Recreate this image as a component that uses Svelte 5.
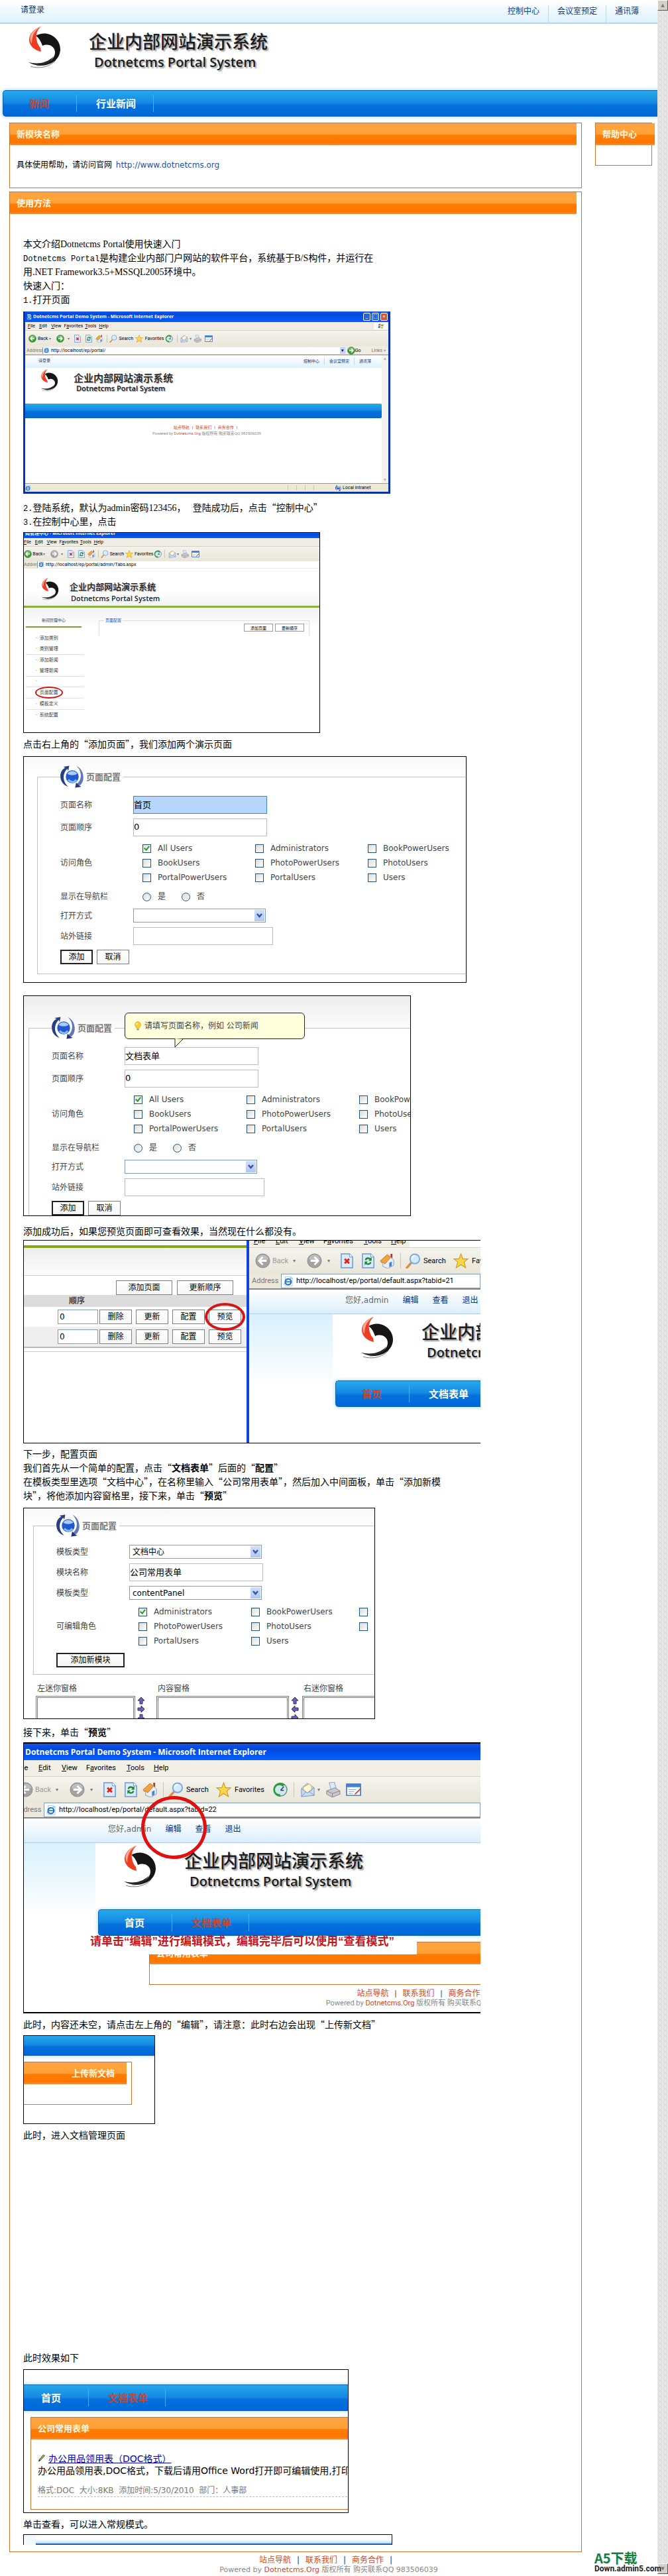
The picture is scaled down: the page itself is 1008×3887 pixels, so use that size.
<script>
  const roles = [
    "All Users", "Administrators", "BookPowerUsers",
    "BookUsers", "PhotoPowerUsers", "PhotoUsers",
    "PortalPowerUsers", "PortalUsers", "Users",
  ];
  const editRoles = ["Administrators", "BookPowerUsers", "", "PhotoPowerUsers", "PhotoUsers", "", "PortalUsers", "Users"];
  const adminMenu = ["添加类别", "类别管理", "添加新闻", "管理新闻", "", "页面配置", "模板定义", "系统配置"];
  const docMenu = ["首页", "文档表单"];
</script>

{#snippet logo()}
  <svg class="logo" viewBox="0 0 52 64" aria-hidden="true">
    <path d="M12 14C28 4 49 16 49 34C49 50 34 61 12 59C28 58 41 50 41 39C41 30 31 25 22 29C20 23 17 17 12 14Z" fill="#161414" />
    <path d="M1 54C14 57 28 56 39 45C30 62 14 61 1 54Z" fill="#2b2828" />
    <path d="M4 60C16 64 32 62 42 51" fill="none" stroke="#777" stroke-width="1" />
    <path d="M20 0C13 6 11 14 14 23C15 27 17 30 19 32L20 38C10 36 2 29 2 20C2 10 11 3 20 0Z" fill="#ee3d22" />
    <path d="M20 0C10 6 6 14 6 26C0 16 5 6 20 0Z" fill="#f9a58f" />
  </svg>
{/snippet}

{#snippet brand()}
  <div class="brand">
    {@render logo()}
    <div class="brand-text">
      <strong>企业内部网站演示系统</strong>
      <span>Dotnetcms Portal System</span>
    </div>
  </div>
{/snippet}

{#snippet nav(items, active)}
  <nav class="nav">
    {#each items as item, i}
      <a href="#nav" class:active={i === active}>{item}</a>
    {/each}
  </nav>
{/snippet}

{#snippet userLinks()}
  <div class="userbar">
    <span>您好,admin</span>
    <a href="#edit">编辑</a>
    <a href="#view">查看</a>
    <a href="#exit">退出</a>
  </div>
{/snippet}

{#snippet footer()}
  <div class="footer">
    <p class="footer-links">
      <a href="#map">站点导航</a><i>|</i><a href="#contact">联系我们</a><i>|</i><a href="#biz">商务合作</a><i>|</i>
    </p>
    <p class="copyright">Powered by <a href="#org">Dotnetcms.Org</a> 版权所有 购买联系QQ 983506039</p>
  </div>
{/snippet}

{#snippet icon(name)}
  <svg class="icon" viewBox="0 0 24 24" aria-hidden="true">
    {#if name === "back" || name === "forward" || name === "back-off" || name === "forward-off"}
      <circle cx="12" cy="12" r="11" fill={name.endsWith("off") ? "#a3a3a3" : "#3a9a35"} stroke={name.endsWith("off") ? "#8a8a8a" : "#2a7a28"} />
      <path d="M3 9a9.500 9.500 0 0 1 18 0a20 20 0 0 1-18 0Z" fill="#fff" opacity=".3" />
      {#if name.startsWith("back")}
        <path d="M12 6l-6 6 6 6M7 12h11" fill="none" stroke="#fff" stroke-width="3" />
      {:else}
        <path d="M12 6l6 6-6 6M17 12H6" fill="none" stroke="#fff" stroke-width="3" />
      {/if}
    {:else if name === "stop" || name === "refresh"}
      <path d="M3 1h13l5 5v17H3Z" fill="#dcebfb" stroke="#6d94cf" stroke-width="1.500" />
      <path d="M16 1v5h5" fill="#fff" stroke="#6d94cf" />
      {#if name === "stop"}
        <path d="M8.500 9l7 7M15.500 9l-7 7" stroke="#e02515" stroke-width="3" />
      {:else}
        <path d="M8 11c1-4 6-4 8-1M16 14c-1 4-6 4-8 1" fill="none" stroke="#1d8a2f" stroke-width="2.500" />
        <path d="M17.500 6v6h-5ZM6.500 19v-6h5Z" fill="#1d8a2f" />
      {/if}
    {:else if name === "home"}
      <path d="M17 1h3v7h-3Z" fill="#b33a2e" />
      <path d="M5 12v9l8 3 9-5v-8l-7-7Z" fill="#e6effb" stroke="#7d9cc9" />
      <path d="M1 12L12 2l5 5-9 10-3-3-2 1Z" fill="#f2a33f" stroke="#c67420" />
      <path d="M15 15l4-2v7l-4 2Z" fill="#4f7fc4" />
    {:else if name === "search"}
      <path d="M9 15L2 23" stroke="#d98b4a" stroke-width="3.500" stroke-linecap="round" />
      <circle cx="14.500" cy="9" r="7.500" fill="#d3ecfd" stroke="#7fa9d6" stroke-width="2" />
      <path d="M10 8a5 5 0 0 1 5-4" fill="none" stroke="#fff" stroke-width="2" />
    {:else if name === "star"}
      <path d="M12 1l3 8h8l-6 5 2.500 9L12 18l-7.500 5L7 14 1 9h8Z" fill="#fbd84a" stroke="#d39a1e" stroke-width="1.200" />
    {:else if name === "history"}
      <circle cx="13" cy="12" r="10" fill="#cfe6ee" stroke="#5f8f8f" stroke-width="1.500" />
      <path d="M20 4A11 11 0 1 0 13 23l-1-4a7 7 0 1 1 4-12Z" fill="#2f9a3b" />
      <path d="M13 13l5-6M13 13h5" stroke="#246" stroke-width="1.500" />
    {:else if name === "mail"}
      <path d="M2 10l9-8 11 7v12L2 23Z" fill="#c7dcf5" stroke="#7795c4" />
      <path d="M5 8l9-5 4 3v7l-7 4-6-4Z" fill="#fff7da" stroke="#c9a85a" />
      <path d="M2 10l9 7 11-8M2 23l7-8M22 21l-8-6" fill="none" stroke="#7795c4" />
    {:else if name === "print"}
      <path d="M6 1l8-1 3 10-8 2Z" fill="#dbe8f8" stroke="#8aa0bd" />
      <path d="M2 14l13-5 8 5v5l-12 5-9-5Z" fill="#c9c9cf" stroke="#84848c" />
      <path d="M2 14l9 4 12-4M11 18v6" fill="none" stroke="#84848c" />
    {:else if name === "edit"}
      <path d="M1 3h22v18H1Z" fill="#fff" stroke="#2f66b8" stroke-width="1.500" />
      <path d="M1 3h22v5H1Z" fill="#3f80d8" />
      <path d="M4 12h12M4 15h9M4 18h7" stroke="#8aa5c9" />
      <path d="M23 9l-8 8-2 3 3-1 8-8Z" fill="#c7573a" />
    {:else if name === "ie"}
      <path d="M4 1h13l4 4v18H4Z" fill="#fff" stroke="#8ba8d0" />
      <circle cx="11" cy="13" r="7" fill="none" stroke="#1d6fc9" stroke-width="3.500" />
      <path d="M5 13h13" stroke="#1d6fc9" stroke-width="2.500" />
      <path d="M1 20C4 10 14 3 21 4" fill="none" stroke="#3f9ae0" stroke-width="1.500" />
    {:else if name === "globe"}
      <circle cx="12" cy="12" r="6.500" fill="#2458d0" />
      <path d="M7 9a6 6 0 0 1 10 0c-3 2-7 2-10 0Z" fill="#a9ccfa" />
      <path d="M8 15c3 3 6 3 8 0" fill="none" stroke="#7fc0ff" stroke-width="2" />
      <path d="M8 22C-2 19-2 6 5 3L3 2l6-1-1 5-1-2C2 9 2 17 8 22Z" fill="#27407f" />
      <path d="M16 1c9 4 9 17 3 20l2 1-6 1 1-5 1 1C22 15 22 6 16 1Z" fill="#5f79b8" />
      <path d="M19 21l2 1-6 1 1-5 1 1Z" fill="#27307a" />
    {:else if name === "bulb"}
      <path d="M12 1a8 8 0 0 0-5 14l2 4h6l2-4A8 8 0 0 0 12 1Z" fill="#fccb2f" stroke="#e0a010" />
      <path d="M9 20h6v3H9Z" fill="#8a8a8a" />
      <circle cx="9.500" cy="7" r="2.500" fill="#fff3b0" />
    {:else if name === "pencil"}
      <path d="M3 22l2-6L17 2l4 3L8 19Z" fill="#b9a46a" stroke="#222" stroke-width="1.500" />
      <path d="M3 22l2-6 3 3Z" fill="#222" />
    {:else if name === "flag"}
      <path d="M3 5c3-2 5-2 8 0l-1 6c-3-2-5-2-8 0Z" fill="#e8532b" />
      <path d="M13 6c3 1 6 1 9-1l-2 7c-3 1-5 1-8 0Z" fill="#6fb53a" />
      <path d="M2 13c3-2 5-2 8 0l-2 7c-2-2-5-2-7 0Z" fill="#3c7fd9" />
      <path d="M12 14c3 1 5 1 8 0l-2 7c-3 1-5 1-8-1Z" fill="#f6c12c" />
    {/if}
  </svg>
{/snippet}

{#snippet menuRow()}
  <div class="menu-row">
    <span><u>F</u>ile</span><span><u>E</u>dit</span><span><u>V</u>iew</span>
    <span>F<u>a</u>vorites</span><span><u>T</u>ools</span><span><u>H</u>elp</span>
  </div>
{/snippet}

{#snippet toolbar(back, forward)}
  <div class="toolbar">
    <div class="tools">
      {@render icon(back)}
      <span class:off={back === "back-off"}>Back</span><i>▾</i>
      {@render icon(forward)}<i>▾</i>
      {@render icon("stop")}
      {@render icon("refresh")}
      {@render icon("home")}
      <b></b>
      {@render icon("search")}<span>Search</span>
      {@render icon("star")}<span>Favorites</span>
      {@render icon("history")}
      <b></b>
      {@render icon("mail")}<i>▾</i>
      {@render icon("print")}
      {@render icon("edit")}
    </div>
  </div>
{/snippet}

{#snippet address(url)}
  <div class="address">
    <span>Address</span>
    <div class="url">{@render icon("ie")}{url}</div>
  </div>
{/snippet}

{#snippet legend()}
  <legend>{@render icon("globe")}页面配置</legend>
{/snippet}

{#snippet checks(list)}
  <div class="checks">
    {#each list as role, i}
      <label><input type="checkbox" checked={i === 0} aria-label={role || "角色"} />{role}</label>
    {/each}
  </div>
{/snippet}

{#snippet dropdown(id, value)}
  <span class="dropdown">
    <select {id}><option>{value}</option></select>
    <svg viewBox="0 0 15 17" aria-hidden="true"><path d="M4 6l3.500 4L11 6" fill="none" stroke="#3c5590" stroke-width="2.500" /></svg>
  </span>
{/snippet}

{#snippet pageForm(id, name)}
  <fieldset class="config">
    {@render legend()}
    <div class="rows">
      <label for="{id}-name">页面名称</label>
      <input id="{id}-name" class="text" class:focused={name === "首页"} type="text" value={name} />
      <label for="{id}-order">页面顺序</label>
      <input id="{id}-order" class="text" type="text" value="0" />
      <span>访问角色</span>
      {@render checks(roles)}
      <span>显示在导航栏</span>
      <div class="radios">
        <label><input type="radio" name="{id}-show" />是</label>
        <label><input type="radio" name="{id}-show" />否</label>
      </div>
      <label for="{id}-open">打开方式</label>
      {@render dropdown(id + "-open", "")}
      <label for="{id}-link">站外链接</label>
      <input id="{id}-link" class="text wide" type="text" />
      <div class="actions">
        <button class="btn primary">添加</button>
        <button class="btn">取消</button>
      </div>
    </div>
  </fieldset>
{/snippet}

{#snippet arrow(turn)}
  <svg class="arrow" viewBox="0 0 12 12" aria-hidden="true">
    <path d="M6 1l5 5H8v5H4V6H1Z" transform="rotate({turn} 6 6)" fill="#6a62b5" stroke="#2d2a66" />
  </svg>
{/snippet}

<div class="page">
  <div class="content">
    <header>
      <div class="topbar">
        <a class="login" href="#login">请登录</a>
        <div class="toplinks">
          <a href="#control">控制中心</a><a href="#room">会议室预定</a><a href="#book">通讯薄</a>
        </div>
      </div>
      {@render brand()}
      {@render nav(["新闻", "行业新闻"], 0)}
    </header>

    <div class="columns">
      <main>
        <section class="panel">
          <h2>新模块名称</h2>
          <p class="help">具体使用帮助，请访问官网 <a href="#site">http://www.dotnetcms.org</a></p>
        </section>

        <section class="panel">
          <h2>使用方法</h2>
          <article>
            <p>
              本文介绍<span class="serif">Dotnetcms Portal</span>使用快速入门<br />
              <span class="mono">Dotnetcms Portal</span>是构建企业内部门户网站的软件平台，系统基于<span class="serif">B/S</span>构件，并运行在<br />
              用<span class="serif">.NET Framework3.5+MSSQL2005</span>环境中。<br />
              快速入门：<br />
              <span class="mono">1.</span>打开页面
            </p>

            <figure class="shot-home small">
              <div class="title-row">
                {@render icon("ie")}<span>Dotnetcms Portal Demo System - Microsoft Internet Explorer</span>
                <div class="win"><i>_</i><i>□</i><i class="close">×</i></div>
              </div>
              <div class="menu-line">{@render menuRow()}<div class="flag">{@render icon("flag")}</div></div>
              {@render toolbar("back", "forward")}
              <div class="address-line">
                {@render address("http://localhost/ep/portal/")}
                <i class="drop">▾</i>{@render icon("forward")}<span>Go</span><span class="links">Links »</span>
              </div>
              <div class="view">
                <div class="view-page">
                  <div class="topbar">
                    <span class="login">请登录</span>
                    <div class="toplinks"><span>控制中心</span><span>会议室预定</span><span>通讯薄</span></div>
                  </div>
                  {@render brand()}
                  {@render nav([], -1)}
                  {@render footer()}
                </div>
                <div class="view-scroll"><i>▴</i><i>▾</i></div>
              </div>
              <div class="status">{@render icon("ie")}<b></b><b></b><b></b><b></b><span class="zone">{@render icon("globe")}Local intranet</span></div>
            </figure>

            <p>
              <span class="mono">2.</span>登陆系统，默认为<span class="serif">admin </span>密码<span class="serif">123456</span>，<span class="mono">&nbsp;</span> 登陆成功后，点击“控制中心”<br />
              <span class="mono">3.</span>在控制中心里，点击
            </p>

            <figure class="shot-admin small">
              <div class="title-row"><span>闻管理中心 - Microsoft Internet Explorer</span></div>
              <div class="menu-line">{@render menuRow()}</div>
              {@render toolbar("back", "forward-off")}
              <div class="address-line">{@render address("http://localhost/ep/portal/admin/Tabs.aspx")}</div>
              {@render brand()}
              <div class="admin">
                <div class="side">
                  <h3>新闻管理中心</h3>
                  <ul>
                    {#each adminMenu as item, i}
                      <li class:ruled={i === 1 || i > 2}>
                        <i>·</i><span class:ringed={i === 5}>{item}</span>
                      </li>
                    {/each}
                  </ul>
                </div>
                <fieldset>
                  <legend>页面配置</legend>
                  <button>添加页面</button><button>更新顺序</button>
                </fieldset>
              </div>
            </figure>

            <p>点击右上角的“添加页面”，我们添加两个演示页面</p>

            <figure class="shot-form first">{@render pageForm("a", "首页")}</figure>

            <figure class="shot-form second">
              {@render pageForm("b", "文档表单")}
              <div class="tip">
                {@render icon("bulb")}请填写页面名称，例如 公司新闻
                <svg viewBox="0 0 14 14" aria-hidden="true"><path d="M1 0v13L13 1" fill="#ffffdc" stroke="#222" /></svg>
              </div>
            </figure>

            <p>添加成功后，如果您预览页面即可查看效果，当然现在什么都没有。</p>

            <figure class="shot-split">
              <div class="list">
                <div class="green"></div>
                <div class="list-head"></div>
                <div class="list-actions"><button class="btn">添加页面</button><button class="btn">更新顺序</button></div>
                <table>
                  <thead><tr><th>顺序</th></tr></thead>
                  <tbody>
                    {#each [0, 1] as row}
                      <tr>
                        <td>
                          <input type="text" value="0" aria-label="顺序" />
                          <button class="btn">删除</button>
                          <button class="btn">更新</button>
                          <button class="btn">配置</button>
                          <button class="btn" class:circled={row === 0}>预览</button>
                        </td>
                      </tr>
                    {/each}
                  </tbody>
                </table>
                <div class="list-end"></div>
              </div>
              <div class="browser">
                {@render menuRow()}
                {@render toolbar("back-off", "forward-off")}
                {@render address("http://localhost/ep/portal/default.aspx?tabid=21")}
                {@render userLinks()}
                <div class="inner">{@render brand()}{@render nav(docMenu, 0)}</div>
              </div>
            </figure>

            <p>
              下一步，配置页面<br />
              我们首先从一个简单的配置，点击“<b>文档表单</b>”后面的“<b>配置</b>”<br />
              在模板类型里选项“文档中心”，在名称里输入“公司常用表单”，然后加入中间面板，单击“添加新模<br />
              块”，将他添加内容窗格里，接下来，单击“<b>预览</b>”
            </p>

            <figure class="shot-form module">
              <fieldset class="config">
                {@render legend()}
                <div class="rows">
                  <label for="m-type">模板类型</label>
                  {@render dropdown("m-type", "文档中心")}
                  <label for="m-name">模块名称</label>
                  <input id="m-name" class="text" type="text" value="公司常用表单" />
                  <label for="m-panel">模板类型</label>
                  {@render dropdown("m-panel", "contentPanel")}
                  <span>可编辑角色</span>
                  {@render checks(editRoles)}
                  <div class="actions"><button class="btn primary long">添加新模块</button></div>
                </div>
              </fieldset>
              <div class="panes">
                <div class="pane"><span>左迷你窗格</span><div class="box"></div></div>
                <div class="arrows">{@render arrow(0)}{@render arrow(90)}{@render arrow(180)}</div>
                <div class="pane middle"><span>内容窗格</span><div class="box"></div></div>
                <div class="arrows">{@render arrow(0)}{@render arrow(270)}{@render arrow(90)}</div>
                <div class="pane"><span>右迷你窗格</span><div class="box"></div></div>
              </div>
            </figure>

            <p>接下来，单击“<b>预览</b>”</p>

            <figure class="shot-edit">
              <div class="title-row"><span>Dotnetcms Portal Demo System - Microsoft Internet Explorer</span></div>
              <div class="browser">
                {@render menuRow()}
                {@render toolbar("back-off", "forward-off")}
                {@render address("http://localhost/ep/portal/default.aspx?tabid=22")}
                {@render userLinks()}
                <div class="inner">
                  {@render brand()}
                  {@render nav(docMenu, 1)}
                  <div class="panel"><h2>公司常用表单</h2></div>
                  {@render footer()}
                </div>
              </div>
              <p class="note">请单击“编辑”进行编辑模式，编辑完毕后可以使用“查看模式”</p>
              <div class="circle"></div>
            </figure>

            <p>此时，内容还未空，请点击左上角的“编辑”，请注意：此时右边会出现“上传新文档”</p>

            <figure class="shot-upload">
              {@render nav([], -1)}
              <div class="panel"><h2>上传新文档</h2></div>
            </figure>

            <p>此时，进入文档管理页面</p>
            <div class="missing"></div>
            <p>此时效果如下</p>

            <figure class="shot-docs">
              {@render nav(docMenu, 1)}
              <div class="panel">
                <h2>公司常用表单</h2>
                <div class="doc">
                  <div>{@render icon("pencil")}<a href="#doc">办公用品领用表（DOC格式）</a></div>
                  <div>办公用品领用表,DOC格式，下载后请用Office Word打开即可编辑使用,打印</div>
                  <div class="meta">格式:DOC&nbsp; 大小:8KB&nbsp; 添加时间:5/30/2010&nbsp; 部门：人事部</div>
                </div>
              </div>
            </figure>

            <p>单击查看，可以进入常规模式。</p>

            <figure class="shot-last"><div></div></figure>
          </article>
        </section>
      </main>

      <aside class="panel">
        <h2>帮助中心</h2>
      </aside>
    </div>

    {@render footer()}
  </div>

  <div class="scrollbar">
    <button aria-label="向上滚动">▲</button>
    <button aria-label="向下滚动">▼</button>
  </div>
  <div class="watermark"><strong>A5下载</strong><span>Down.admin5.com</span></div>
</div>

<style>
  :global(body) {
    margin: 0;
    background: #fff;
  }

  .page {
    position: relative;
    display: flex;
    font: 12px/18px "DejaVu Sans", "Noto Sans CJK SC", sans-serif;
    color: #000;
  }
  .content {
    flex: 1;
    min-width: 0;
  }
  a {
    text-decoration: none;
  }
  i {
    font-style: normal;
  }
  p,
  h2,
  h3,
  figure {
    margin: 0;
  }
  button,
  input,
  select {
    box-sizing: border-box;
    margin: 0;
    font: inherit;
  }
  .icon {
    flex: none;
    width: 23px;
    height: 23px;
  }

  /* site header */
  .topbar {
    display: flex;
    justify-content: space-between;
    box-sizing: border-box;
    height: 36px;
    padding: 6px 28px 0 31px;
    background: linear-gradient(#fff, #def1fd);
    border-bottom: 2px solid #b4d7ee;
    color: #0b3b80;
  }
  .topbar a {
    color: #0b3b80;
  }
  .toplinks {
    display: flex;
    padding-top: 2px;
  }
  .toplinks > * {
    padding: 0 0 0 13px;
    margin-left: 13px;
    border-left: 1px solid #b9d9ee;
  }
  .toplinks > :first-child {
    border: 0;
  }

  .brand {
    display: flex;
    align-items: flex-start;
    box-sizing: border-box;
    height: 100px;
    padding: 4px 0 0 42px;
  }
  .logo {
    flex: none;
    width: 52px;
    height: 64px;
  }
  .brand-text {
    display: flex;
    flex-direction: column;
    margin: 4px 0 0 40px;
    color: #1c1c1c;
    white-space: nowrap;
    text-shadow: 2px 2px 2px #999;
  }
  .brand-text strong {
    font: 500 27px/36px "Noto Sans CJK SC", sans-serif;
  }
  .brand-text span {
    padding-left: 8px;
    font: 600 20px/28px "Open Sans", sans-serif;
  }

  .nav {
    display: flex;
    align-items: center;
    box-sizing: border-box;
    height: 40px;
    margin-left: 4px;
    background: linear-gradient(#27a9ec, #1488e2 48%, #0571dc 56%, #0068d9);
    border: 1px solid #0f62b0;
    border-right: 0;
    border-radius: 5px 0 0 5px;
    box-shadow: 0 0 4px 2px #c8e8fc;
  }
  .nav a {
    flex: none;
    padding: 0 26px 0 29px;
    border-right: 1px solid #4fb0f0;
    font: bold 15px/26px "Noto Sans CJK SC", sans-serif;
    color: #fff;
    white-space: nowrap;
  }
  .nav a:first-child {
    padding: 0 41px 0 39px;
  }
  .nav a.active {
    color: #c8452e;
  }

  /* panels */
  .columns {
    display: flex;
    align-items: flex-start;
    gap: 20px;
    padding: 9px 8px 0 14px;
  }
  main {
    flex: 1;
    min-width: 0;
  }
  .panel {
    border: 1px solid #c9752c;
  }
  main > .panel {
    margin-bottom: 5px;
  }
  main > .panel:last-child {
    margin: 0;
  }
  .panel h2 {
    height: 33px;
    margin-right: 7px;
    padding-left: 10px;
    background: linear-gradient(#f3a05a, #ffa53d 10%, #ffa036 50%, #ff7d00 54%, #ff7600 90%, #e89550);
    font: bold 13px/31px "Noto Sans CJK SC", sans-serif;
    color: #fff8e8;
  }
  .help {
    height: 43px;
    padding: 21px 10px 0;
  }
  .help a {
    margin-left: 2px;
    color: #1c4fb5;
  }
  aside {
    flex: none;
    width: 84px;
    height: 63px;
  }
  aside.panel h2 {
    margin-right: -5px;
  }

  /* article */
  article {
    padding: 34px 20px 10px;
    font: 14px/21px "Noto Sans CJK SC", sans-serif;
  }
  .serif {
    font-family: "Liberation Serif", serif;
    line-height: 1;
  }
  .mono {
    font-family: "Liberation Mono", monospace;
    font-size: 12px;
    line-height: 1;
  }
  figure {
    position: relative;
    box-sizing: border-box;
    max-width: 100%;
    overflow: hidden;
    background: #fff;
    border: 1px solid #000;
    font: 12px/18px "DejaVu Sans", "Noto Sans CJK SC", sans-serif;
  }
  .missing {
    height: 315px;
  }

  /* browser chrome */
  .title-row {
    display: flex;
    align-items: center;
    height: 25px;
    padding-left: 2px;
    background: linear-gradient(#1256e8, #0448dd 30%, #0660ff);
    font: bold 12px/25px "Open Sans", "Noto Sans CJK SC", sans-serif;
    color: #fff;
    white-space: nowrap;
  }
  .browser {
    overflow: hidden;
    font-family: Roboto, "Noto Sans CJK SC", sans-serif;
  }
  .menu-row {
    display: grid;
    grid-template-columns: 33fr 35fr 37fr 61fr 41fr 28fr;
    align-items: center;
    box-sizing: border-box;
    height: 24px;
    padding-left: 7px;
    width: 242px;
    font-size: 11px;
    white-space: nowrap;
  }
  .toolbar {
    display: flex;
    align-items: center;
    height: 40px;
    padding-left: 9px;
    background: linear-gradient(#f4f3ee, #e9e6d8);
    border-top: 1px solid #d6d2c2;
    box-sizing: border-box;
  }
  .tools {
    display: grid;
    flex: none;
    grid-template-columns: 26fr 31fr 21fr 31fr 18fr 32fr 29fr 31fr 8fr 27fr 45fr 28fr 57fr 32fr 10fr 26fr 12fr 31fr 24fr;
    align-items: center;
    width: 519px;
    font-size: 11px;
    white-space: nowrap;
  }
  .tools > * {
    min-width: 0;
  }
  .tools i {
    font-size: 8px;
    color: #777;
  }
  .tools b {
    align-self: stretch;
    border-left: 1px solid #c9c5b5;
  }
  .off {
    color: #999;
  }
  .address {
    display: flex;
    align-items: center;
    height: 24px;
    padding-left: 4px;
    box-sizing: border-box;
    background: #ece9dc;
    border-bottom: 2px solid #888;
    font-size: 11px;
    color: #777;
  }
  .address > span {
    flex: none;
    width: 44px;
  }
  .url {
    display: flex;
    flex: 1;
    align-items: center;
    gap: 4px;
    height: 20px;
    padding-left: 3px;
    background: #fff;
    border: 1px solid #7f9db9;
    color: #000;
    white-space: nowrap;
  }
  .url .icon {
    width: 15px;
    height: 15px;
  }
  .browser .menu-row,
  .browser {
    background-color: #f1efe6;
  }
  .userbar {
    display: flex;
    gap: 21px;
    box-sizing: border-box;
    height: 37px;
    padding: 7px 0 0 145px;
    background: linear-gradient(#fff, #dbeefb);
    border-bottom: 1px solid #b0cfe4;
    font-family: "DejaVu Sans", "Noto Sans CJK SC", sans-serif;
    color: #666;
    white-space: nowrap;
  }
  .userbar a {
    color: #003399;
  }
  .inner {
    height: 300px;
    padding-left: 126px;
    background: linear-gradient(90deg, transparent 126px, #fff 126px), linear-gradient(#d8f1fc, #fff 110px);
  }

  /* footer */
  .footer {
    padding-top: 4px;
    text-align: center;
    color: #888;
  }
  .footer-links {
    line-height: 16px;
  }
  .footer-links i {
    padding: 0 9px;
    color: #333;
  }
  .footer a {
    color: #d8431c;
  }
  .copyright {
    font-size: 11px;
    line-height: 13px;
  }

  /* reduced browser shots */
  .small {
    font: 7px/10px Roboto, "Noto Sans CJK SC", sans-serif;
  }
  .small .icon {
    width: 12px;
    height: 12px;
  }
  .small .title-row {
    font-size: 7px;
    line-height: 16px;
  }
  .small .menu-line,
  .small .address-line {
    display: flex;
    align-items: center;
    background: #efede3;
  }
  .small .menu-row {
    width: 126px;
    height: 12px;
    padding-left: 4px;
    font-size: 7px;
  }
  .small .toolbar {
    height: 24px;
    padding-left: 5px;
  }
  .small .tools {
    width: 279px;
    font-size: 7px;
  }
  .small .tools i {
    font-size: 6px;
  }
  .small .address-line {
    height: 13px;
    border-bottom: 1px solid #888;
  }
  .small .address {
    flex: 1;
    height: 12px;
    padding-left: 2px;
    border: 0;
    font-size: 7px;
  }
  .small .address > span {
    width: 24px;
  }
  .small .url {
    height: 10px;
    gap: 2px;
    padding-left: 1px;
    border-width: 0 0 0 1px;
  }
  .small .url .icon {
    width: 9px;
    height: 9px;
  }
  .small .logo {
    width: 28px;
    height: 34px;
  }
  .small .brand-text {
    text-shadow: 1px 1px 1px #999;
  }

  .shot-home {
    width: 554px;
    margin: 8px 0 10px;
    border: 3px solid #0832b0;
    border-top: 0;
  }
  .shot-home .title-row {
    height: 16px;
    gap: 2px;
  }
  .shot-home .title-row .icon {
    width: 8px;
    height: 8px;
  }
  .win {
    display: flex;
    gap: 2px;
    margin-left: auto;
    padding-right: 1px;
  }
  .win i {
    width: 9px;
    height: 10px;
    border: 1px solid #fff;
    border-radius: 2px;
    background: #2a62e0;
    line-height: 9px;
    text-align: center;
  }
  .win .close {
    background: #dd5335;
  }
  .flag {
    display: flex;
    justify-content: center;
    width: 22px;
    margin-left: auto;
    background: #fff;
  }
  .shot-home .flag .icon {
    width: 10px;
    height: 10px;
  }
  .drop {
    width: 8px;
    margin-right: 3px;
    background: #c3d3fb;
    text-align: center;
  }
  .shot-home .address-line .links {
    padding: 0 4px 0 16px;
    color: #777;
  }
  .view {
    display: flex;
    height: 193px;
  }
  .view-page {
    flex: 1;
  }
  .view-scroll {
    display: flex;
    flex-direction: column;
    justify-content: space-between;
    width: 10px;
    background: #f3f2ec;
    color: #aaa;
    text-align: center;
  }
  .shot-home .topbar {
    height: 19px;
    padding: 3px 16px 0 20px;
    border-bottom: 0;
    font-size: 6px;
  }
  .shot-home .toplinks {
    padding-top: 1px;
  }
  .shot-home .toplinks > * {
    height: 10px;
    margin-left: 7px;
    padding-left: 7px;
  }
  .shot-home .brand {
    height: 54px;
    padding: 2px 0 0 23px;
  }
  .shot-home .brand-text {
    margin: 4px 0 0 22px;
  }
  .shot-home .brand-text strong {
    font-size: 15px;
    line-height: 17px;
  }
  .shot-home .brand-text span {
    padding-left: 4px;
    font-size: 11px;
    line-height: 15px;
  }
  .shot-home .nav {
    height: 22px;
    margin: 0;
    border-width: 0 0 1px;
    border-radius: 0 2px 2px 0;
    box-shadow: none;
  }
  .shot-home .footer {
    padding: 9px 0 0 10px;
  }
  .shot-home .footer-links {
    font-size: 6px;
    line-height: 10px;
  }
  .shot-home .footer-links i {
    padding: 0 4px;
  }
  .shot-home .copyright {
    font-size: 6px;
    line-height: 8px;
  }
  .status {
    display: flex;
    align-items: center;
    height: 12px;
    background: #ece9d8;
    border-top: 1px solid #999;
  }
  .shot-home .status .icon {
    width: 9px;
    height: 9px;
  }
  .status b {
    height: 8px;
    width: 12px;
    border-left: 1px solid #ccc8b8;
  }
  .status .icon + b {
    margin-left: auto;
  }
  .zone {
    display: flex;
    align-items: center;
    gap: 2px;
    width: 100px;
    padding-left: 20px;
    box-sizing: border-box;
  }

  .shot-admin {
    width: 448px;
    height: 303px;
    margin: 6px 0;
  }
  .shot-admin .title-row {
    align-items: flex-end;
    height: 8px;
    line-height: 14px;
    overflow: hidden;
  }
  .shot-admin .menu-row {
    padding-left: 0;
    width: 120px;
  }
  .shot-admin .toolbar {
    height: 22px;
    padding-left: 0;
  }
  .shot-admin .tools {
    width: 265px;
  }
  .shot-admin .address-line {
    height: 11px;
  }
  .shot-admin .address {
    padding-left: 0;
  }
  .shot-admin .address > span {
    width: 20px;
  }
  .shot-admin .brand {
    height: 59px;
    padding: 14px 0 0 26px;
    background: linear-gradient(#fff 60%, #f3f3f3);
    border-bottom: 3px solid #8fae3c;
  }
  .shot-admin .brand-text {
    margin: 4px 0 0 15px;
  }
  .shot-admin .brand-text strong {
    font-size: 13px;
    line-height: 18px;
  }
  .shot-admin .brand-text span {
    padding-left: 2px;
    font-size: 11px;
    line-height: 18px;
    text-shadow: none;
  }
  .admin {
    display: flex;
    align-items: flex-start;
    height: 190px;
    padding: 14px 15px 0 3px;
    box-sizing: border-box;
    background: linear-gradient(#f0f0f0, #fff 30px);
  }
  .side {
    width: 88px;
  }
  .side h3 {
    width: 84px;
    margin-bottom: 8px;
    padding-bottom: 4px;
    border-bottom: 2px solid #7fa030;
    font: 6px/10px "Noto Sans CJK SC", sans-serif;
    text-align: center;
    color: #444;
  }
  .side ul {
    display: flex;
    flex-direction: column;
    height: 132px;
    margin: 0;
    padding: 0;
    list-style: none;
  }
  .side li {
    display: flex;
    flex: 1;
    align-items: center;
    gap: 4px;
    padding-left: 15px;
    color: #444;
  }
  .side li.ruled {
    border-bottom: 1px solid #e2e2e2;
  }
  .side li:last-child {
    border: 0;
  }
  .ringed {
    position: relative;
  }
  .ringed::after {
    content: "";
    position: absolute;
    inset: -4px -7px;
    border: 2px solid #d01414;
    border-radius: 50%;
  }
  .admin fieldset {
    display: flex;
    flex: 1;
    justify-content: flex-end;
    gap: 3px;
    height: 28px;
    margin: 0 0 0 22px;
    padding: 0 7px;
    box-sizing: border-box;
    border: 1px solid #ddd;
    border-bottom: 0;
  }
  .admin legend {
    padding: 0 2px;
    font-size: 6px;
    color: #1450c8;
  }
  .admin button {
    width: 44px;
    height: 12px;
    padding: 0;
    background: #fff;
    border: 1px solid #999;
    font-size: 6px;
    line-height: 9px;
  }

  /* forms */
  .config {
    display: block;
    margin: 0 -20px 0 0;
    padding: 0 0 0 34px;
    border: 1px solid #c3c3c3;
    color: #444;
  }
  .config legend {
    display: flex;
    align-items: center;
    gap: 3px;
    height: 36px;
    margin: 0;
    padding: 0 4px 0 0;
    font: bold 13px/18px "Noto Sans CJK SC", sans-serif;
    color: #777;
  }
  .config legend .icon {
    width: 36px;
    height: 36px;
  }
  .rows {
    display: grid;
    grid-template-columns: 110px 1fr;
    align-items: center;
    gap: 7px 0;
    padding-top: 11px;
  }
  .text {
    width: 202px;
    height: 27px;
    padding: 0 0 2px;
    border: 1px solid #bbb;
    font-size: 13px;
    color: #000;
  }
  .text.wide {
    width: 211px;
  }
  .text.focused {
    background: #b6d6fb;
    border-color: #3f87c9;
  }
  .checks {
    display: grid;
    grid-template-columns: repeat(3, 170px);
    grid-auto-rows: 22px;
    padding-left: 14px;
  }
  .checks label,
  .radios label {
    display: flex;
    align-items: center;
    gap: 10px;
    white-space: nowrap;
  }
  .radios {
    display: flex;
    gap: 24px;
    height: 22px;
    padding-left: 14px;
  }
  input[type="checkbox"],
  input[type="radio"] {
    appearance: none;
    flex: none;
    position: relative;
    width: 13px;
    height: 13px;
    background: linear-gradient(135deg, #dcdcd7, #fff);
    border: 1px solid #1c5180;
  }
  input[type="radio"] {
    border-radius: 50%;
  }
  input[type="checkbox"]:checked::after {
    content: "";
    position: absolute;
    top: 0;
    left: 3px;
    width: 3px;
    height: 6px;
    border: solid #21a121;
    border-width: 0 2px 2px 0;
    transform: rotate(40deg);
  }
  .dropdown {
    position: relative;
    width: 200px;
    height: 21px;
  }
  .dropdown select {
    appearance: none;
    display: block;
    width: 100%;
    height: 21px;
    padding: 0 20px 0 4px;
    background: #fff;
    border: 1px solid #7f9db9;
    border-radius: 0;
    color: #000;
  }
  .dropdown svg {
    position: absolute;
    top: 2px;
    right: 2px;
    width: 15px;
    height: 17px;
    background: linear-gradient(#cfdffd, #b0c6f6);
  }
  .actions {
    display: flex;
    grid-column: 1 / -1;
    gap: 6px;
  }
  .btn {
    width: 49px;
    height: 22px;
    padding: 0;
    background: linear-gradient(#fff, #f6f6f4);
    border: 1px solid #808080;
    line-height: 16px;
    color: #000;
  }
  .btn.primary {
    border: 2px solid #222;
  }
  .btn.long {
    width: 103px;
  }

  .first {
    width: 669px;
    height: 342px;
    margin: 8px 0 19px;
    padding: 12px 0 0 20px;
    background: linear-gradient(#f8f8f8, #fff 30px);
  }
  .first .config {
    height: 316px;
    box-sizing: border-box;
  }
  .second {
    width: 585px;
    height: 333px;
    margin-bottom: 12px;
    padding: 30px 0 0 7px;
    background: linear-gradient(#ededed, #fff 60px);
  }
  .tip {
    position: absolute;
    top: 25px;
    left: 152px;
    display: flex;
    align-items: center;
    gap: 3px;
    width: 272px;
    height: 40px;
    padding-left: 12px;
    box-sizing: border-box;
    background: #ffffdc;
    border: 1px solid #222;
    border-radius: 6px;
    color: #444;
  }
  .tip .icon {
    width: 14px;
    height: 14px;
  }
  .tip svg:last-child {
    position: absolute;
    top: 38px;
    left: 74px;
    width: 14px;
    height: 14px;
  }

  .shot-split {
    display: flex;
    width: 690px;
    height: 307px;
    margin: 3px 0 5px;
    border-right: 0;
  }
  .list {
    flex: none;
    width: 336px;
    border-right: 4px solid #1244dd;
  }
  .green {
    height: 4px;
    margin-top: 7px;
    background: #86a818;
  }
  .list-head {
    height: 41px;
    background: linear-gradient(#eee, #fcfcfc);
    border-bottom: 1px solid #ccc;
  }
  .list-actions {
    display: flex;
    justify-content: flex-end;
    gap: 7px;
    padding: 7px 20px 0 0;
  }
  .list-actions .btn {
    width: 85px;
  }
  table {
    width: 100%;
    border-collapse: collapse;
    border-bottom: 2px solid #bbb;
  }
  th {
    height: 18px;
    padding: 0 0 0 68px;
    background: #dcdcdc;
    text-align: left;
    line-height: 18px;
    color: #444;
  }
  td {
    display: flex;
    gap: 6px;
    padding: 4px 0 4px 51px;
  }
  tbody tr:last-child {
    background: #efefef;
  }
  td input {
    width: 61px;
    height: 22px;
    padding: 0 2px;
    margin-right: -4px;
    border: 1px solid #7f9db9;
  }
  .list-end {
    height: 5px;
    border-bottom: 1px solid #ccc;
  }
  .circled {
    position: relative;
  }
  .circled::after {
    content: "";
    position: absolute;
    inset: -11px -7px;
    border: 4px solid #d81414;
    border-radius: 50%;
  }
  .shot-split .browser {
    flex: 1;
    min-width: 0;
    background: #fff;
  }
  .shot-split .menu-row {
    align-items: start;
    height: 10px;
    line-height: 1px;
    overflow: hidden;
  }

  .module {
    width: 531px;
    height: 319px;
    margin: 8px 0 9px;
    padding: 8px 0 0 14px;
    background: linear-gradient(#f8f8f8, #fff 26px);
  }
  .module .config {
    height: 243px;
    box-sizing: border-box;
  }
  .module .checks {
    grid-template-columns: 170px 163px 100px;
  }
  .panes {
    display: flex;
    align-items: flex-start;
    gap: 2px;
    padding: 12px 0 0 4px;
    color: #444;
  }
  .pane {
    flex: none;
    width: 150px;
    margin-right: 1px;
  }
  .pane.middle {
    width: 200px;
  }
  .pane span {
    padding-left: 2px;
  }
  .box {
    height: 50px;
    margin-top: 2px;
    border: 3px double #7a7a7a;
  }
  .arrows {
    display: flex;
    flex: none;
    flex-direction: column;
    gap: 1px;
    width: 27px;
    padding-top: 21px;
  }
  .arrows:nth-of-type(4) {
    width: 15px;
  }
  .arrow {
    width: 12px;
    height: 12px;
  }

  .shot-edit {
    width: 690px;
    height: 409px;
    margin: 5px 0 6px;
    border-width: 2px 0 2px 1px;
  }
  .shot-edit .browser {
    margin-left: -18px;
  }
  .shot-edit .panel {
    height: 63px;
    margin: 9px -100px 0 81px;
  }
  .shot-edit .footer {
    width: 420px;
    padding: 5px 0 0 288px;
    white-space: nowrap;
  }
  .note {
    position: absolute;
    top: 291px;
    left: 100px;
    width: 493px;
    height: 27px;
    background: #fff;
    font: bold 17px/16px "Liberation Sans", "Noto Sans CJK SC", sans-serif;
    color: #c9141b;
    white-space: nowrap;
  }
  .circle {
    position: absolute;
    top: 79px;
    left: 177px;
    width: 89px;
    height: 85px;
    border: 5px solid #e01010;
    border-radius: 50%;
  }

  .shot-upload {
    width: 199px;
    height: 134px;
    margin: 6px 0;
  }
  .shot-upload .nav {
    height: 30px;
    margin: 0;
    border-width: 0 0 1px;
    border-radius: 0;
  }
  .shot-upload .panel {
    height: 63px;
    margin: 9px 34px 0 -1px;
  }
  .shot-upload h2 {
    padding-right: 18px;
    text-align: right;
  }

  .shot-docs {
    width: 491px;
    height: 217px;
    margin: 7px 0 6px;
    padding-top: 22px;
  }
  .shot-docs .nav {
    margin: 0 0 0 -14px;
  }
  .shot-docs .panel {
    height: 138px;
    margin: 9px -20px 0 10px;
  }
  .doc {
    padding: 20px 0 0 10px;
    font-size: 14px;
    line-height: 18px;
    white-space: nowrap;
  }
  .doc .icon {
    width: 12px;
    height: 12px;
    margin-right: 4px;
  }
  .doc a {
    color: #00c;
    text-decoration: underline;
  }
  .meta {
    margin-top: 12px;
    border-bottom: 1px dashed #bbb;
    font-size: 12px;
    color: #777;
  }

  .shot-last {
    width: 557px;
    height: 16px;
    margin-top: 5px;
    padding-left: 18px;
    background: #f2fafe;
    border-bottom: 0;
  }
  .shot-last div {
    height: 13px;
    background: linear-gradient(#fff 7px, #b5dcf5);
    border-bottom: 2px solid #1f5fa8;
  }

  /* window scrollbar and site stamp */
  .scrollbar {
    display: flex;
    flex: none;
    flex-direction: column;
    justify-content: space-between;
    width: 16px;
    background: repeating-conic-gradient(#d4d0c8 0 25%, #fff 0 50%) 0 0 / 2px 2px;
  }
  .scrollbar button {
    width: 16px;
    height: 16px;
    padding: 0;
    background: #d4d0c8;
    border: 1px solid;
    border-color: #fff #555 #555 #fff;
    font-size: 7px;
    line-height: 12px;
    color: #777;
  }
  .watermark {
    position: absolute;
    right: 10px;
    bottom: 2px;
    display: flex;
    flex-direction: column;
    width: 101px;
    font: bold 12px/12px Roboto, sans-serif;
    color: #222;
  }
  .watermark strong {
    font: bold 20px/20px "Noto Sans CJK SC", sans-serif;
    color: #12803c;
  }
</style>
